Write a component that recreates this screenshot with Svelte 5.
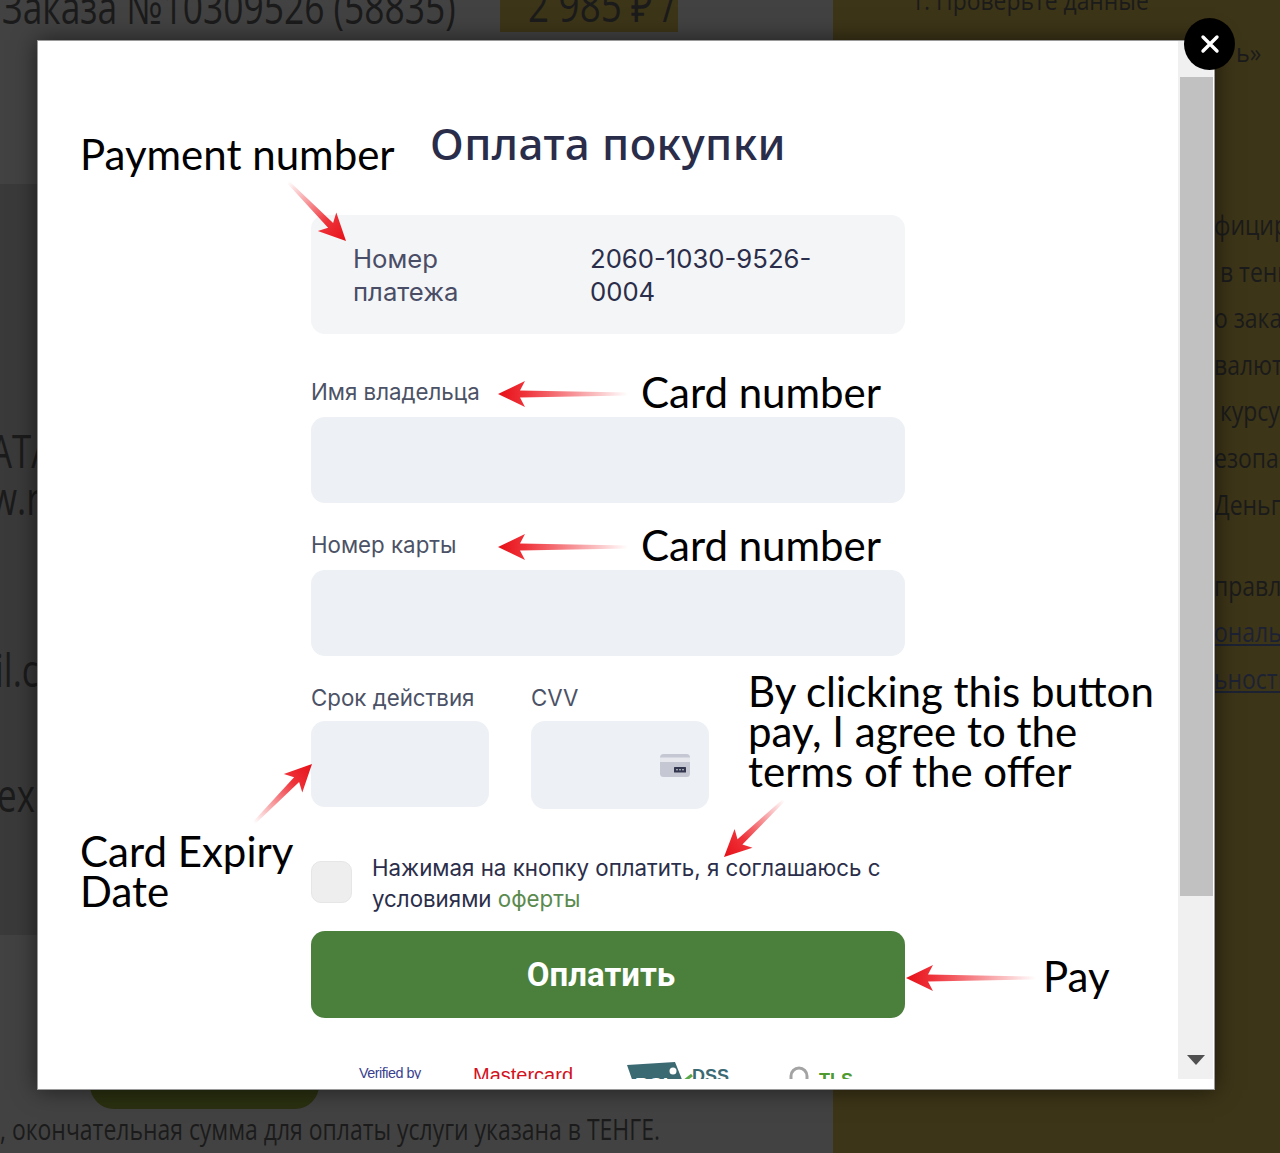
<script>
  // arrows drawn on top of the screenshot: tail -> tip
  const rawArrows = [
    { x1: 288, y1: 182, x2: 346, y2: 241 },
    { x1: 628, y1: 394, x2: 498, y2: 394 },
    { x1: 628, y1: 547, x2: 498, y2: 547 },
    { x1: 254, y1: 823, x2: 312, y2: 764 },
    { x1: 784, y1: 800, x2: 724, y2: 857 },
    { x1: 1036, y1: 978, x2: 906, y2: 978 }
  ];

  const arrows = rawArrows.map((a, i) => {
    const dx = a.x2 - a.x1;
    const dy = a.y2 - a.y1;
    const len = Math.hypot(dx, dy);
    const ux = dx / len;
    const uy = dy / len;
    const nx = -uy;
    const ny = ux;
    const pt = (back, side) =>
      `${(a.x2 - ux * back + nx * side).toFixed(1)},${(a.y2 - uy * back + ny * side).toFixed(1)}`;
    return {
      ...a,
      id: `arrow-${i}`,
      solid: 1 - 27 / len,
      points: [
        pt(0, 0),
        pt(27, 13),
        pt(22, 3.5),
        pt(len, 1.5),
        pt(len, -1.5),
        pt(22, -3.5),
        pt(27, -13)
      ].join(' ')
    };
  });

  const rightLines = [
    { text: 'фицированным' },
    { text: ' в тенге' },
    { text: 'о заказа' },
    { text: 'валюте' },
    { text: ' курсу' },
    { text: 'езопасно' },
    { text: 'Деньги' },
    { text: 'правлен', gap: true },
    { text: 'ональных', link: true },
    { text: 'ьности', link: true }
  ];
</script>

<div class="page">
  <div class="left">
    <div class="order-head">
      <span class="order-title">Заказа №10309526 (58835)</span>
      <span class="order-sum"><span>2 985 ₽ /</span></span>
    </div>
    <div class="band">
      <div class="band-line first">АТА</div>
      <div class="band-line second">w.r</div>
      <div class="band-line third">il.c</div>
      <div class="band-line fourth">ex</div>
    </div>
    <div class="under-btn"></div>
    <div class="total-note">, окончательная сумма для оплаты услуги указана в ТЕНГЕ.</div>
  </div>

  <div class="right">
    <div class="step">1. Проверьте данные</div>
    <div class="step-end">ь»</div>
    <div class="right-list">
      {#each rightLines as line}
        <div class="right-line" class:gap={line.gap} class:link={line.link}>{line.text}</div>
      {/each}
    </div>
  </div>

  <div class="modal">
    <div class="modal-inner">
      <div class="scroll-area">
        <form class="pay-form" on:submit|preventDefault>
          <h1>Оплата покупки</h1>

          <div class="info-box">
            <span class="info-label">Номер платежа</span>
            <span class="info-value">2060-1030-9526-0004</span>
          </div>

          <label class="field-label first" for="holder">Имя владельца</label>
          <input class="field" id="holder" type="text" />

          <label class="field-label second" for="card">Номер карты</label>
          <input class="field" id="card" type="text" />

          <div class="short-row">
            <div class="short-col">
              <label class="field-label" for="expiry">Срок действия</label>
              <input class="field short" id="expiry" type="text" />
            </div>
            <div class="short-col cvv-col">
              <label class="field-label" for="cvv">CVV</label>
              <div class="cvv-wrap">
                <input class="field short cvv" id="cvv" type="text" />
                <svg class="cvv-icon" width="30" height="23" viewBox="0 0 30 23">
                  <rect width="30" height="23" rx="3.5" fill="#c5c8d2" />
                  <rect y="3.5" width="30" height="4.5" fill="#e6e8ed" />
                  <rect x="14" y="13" width="12" height="5.5" rx="0.5" fill="#33364f" />
                  <circle cx="17" cy="15.7" r="0.8" fill="#dfe1e8" />
                  <circle cx="20" cy="15.7" r="0.8" fill="#dfe1e8" />
                  <circle cx="23" cy="15.7" r="0.8" fill="#dfe1e8" />
                </svg>
              </div>
            </div>
          </div>

          <div class="agree">
            <input class="check" type="checkbox" id="agree" />
            <label for="agree">Нажимая на кнопку оплатить, я соглашаюсь с условиями <a href="#offer">оферты</a></label>
          </div>

          <button type="submit">Оплатить</button>

          <div class="logos">
            <span class="visa">Verified by</span>
            <span class="mc">Mastercard</span>
            <span class="pci">
              <svg width="66" height="40" viewBox="0 0 66 40">
                <path d="M0 3 L48 0 L56 20 L56 40 L13 40 Z" fill="#3c6a73" />
                <circle cx="46" cy="9" r="3.5" fill="#fff" />
                <path d="M56 20 L65 13" fill="none" stroke="#5aa84a" stroke-width="3" />
                <text x="8" y="30" font-family="Liberation Sans, sans-serif" font-size="20" font-weight="700" fill="#fff">PCI</text>
              </svg>
              <b>DSS</b>
            </span>
            <span class="tls">
              <svg width="24" height="30" viewBox="0 0 24 30">
                <path d="M4 14 V11 a8 8 0 0 1 16 0 V14" fill="none" stroke="#a3a3a3" stroke-width="3" />
                <rect x="0" y="14" width="24" height="16" rx="2" fill="#6fae3f" />
              </svg>
              <b>TLS</b>
            </span>
          </div>
        </form>
      </div>

      <div class="scrollbar">
        <div class="thumb"></div>
        <span class="scroll-down"></span>
      </div>
    </div>
  </div>

  <button class="close" type="button" aria-label="Закрыть">
    <svg width="20" height="20" viewBox="0 0 20 20">
      <path d="M3 3 L17 17 M17 3 L3 17" stroke="#fff" stroke-width="3.4" stroke-linecap="round" />
    </svg>
  </button>

  <!-- annotations lying over the screenshot -->
  <svg class="arrows" width="1280" height="1153" viewBox="0 0 1280 1153">
    <defs>
      {#each arrows as a}
        <linearGradient id={a.id} gradientUnits="userSpaceOnUse" x1={a.x1} y1={a.y1} x2={a.x2} y2={a.y2}>
          <stop offset="0" stop-color="#ed1c24" stop-opacity="0" />
          <stop offset={a.solid} stop-color="#ed1c24" stop-opacity="0.9" />
          <stop offset="1" stop-color="#e60f17" />
        </linearGradient>
      {/each}
    </defs>
    {#each arrows as a}
      <polygon points={a.points} fill="url(#{a.id})" />
    {/each}
  </svg>

  <div class="note payment">Payment number</div>
  <div class="note card-one">Card number</div>
  <div class="note card-two">Card number</div>
  <div class="note offer">By clicking this button<br />pay, I agree to the<br />terms of the offer</div>
  <div class="note expiry">Card Expiry<br />Date</div>
  <div class="note pay">Pay</div>
</div>

<style>
  :global(body) {
    margin: 0;
    background: #424242;
  }

  .page {
    position: relative;
    width: 1280px;
    height: 1153px;
    overflow: hidden;
    display: grid;
    grid-template-columns: 833px 447px;
    font-family: "Inter", "Noto Sans", sans-serif;
  }

  .left,
  .right {
    font-family: "Open Sans", sans-serif;
    color: #1b1b1b;
  }

  .left {
    background: #424242;
    display: flex;
    flex-direction: column;
    overflow: hidden;
  }

  .order-head {
    height: 184px;
    flex: none;
    display: flex;
    align-items: flex-start;
    padding-left: 2px;
    box-sizing: border-box;
  }

  .order-title {
    margin-top: -21px;
    font-size: 46px;
    line-height: 54px;
    width: 498px;
    flex: none;
    white-space: nowrap;
    transform: scaleX(0.77);
    transform-origin: left;
  }

  .order-sum {
    background: #3d3518;
    width: 150px;
    height: 32px;
    padding-left: 28px;
    flex: none;
    font-size: 46px;
    line-height: 32px;
    white-space: nowrap;
    overflow: hidden;
  }

  .order-sum span {
    display: inline-block;
    transform: translateY(-12px) scaleX(0.8);
    transform-origin: left;
  }

  .band {
    height: 751px;
    flex: none;
    background: #3a3a3a;
    font-size: 46px;
    line-height: 47px;
    overflow: hidden;
  }

  .band-line {
    white-space: nowrap;
    margin-left: -10px;
    transform: scaleX(0.76);
    transform-origin: left;
  }

  .band-line.first {
    margin-top: 243px;
  }

  .band-line.third {
    margin-top: 125px;
    margin-left: -5px;
  }

  .band-line.fourth {
    margin-top: 78px;
    margin-left: -3px;
  }

  .under-btn {
    margin-left: 90px;
    width: 229px;
    height: 174px;
    flex: none;
    background: #2a3010;
    border-radius: 0 0 24px 24px;
  }

  .total-note {
    margin-top: 2px;
    font-size: 30px;
    line-height: 36px;
    white-space: nowrap;
    transform: scaleX(0.765);
    transform-origin: left;
  }

  .right {
    background: #3d3518;
    overflow: hidden;
  }

  .step {
    margin: -16px 0 0 78px;
    font-size: 26px;
    line-height: 32px;
    white-space: nowrap;
    transform: scaleX(0.88);
    transform-origin: left;
  }

  .step-end {
    margin: 20px 0 0 403px;
    font-size: 26px;
    line-height: 32px;
    transform: scaleX(0.9);
    transform-origin: left;
  }

  .right-list {
    margin-top: 134px;
    padding-left: 381px;
  }

  .right-line {
    font-size: 27px;
    line-height: 46.6px;
    white-space: pre;
    transform: scaleX(0.85);
    transform-origin: left;
  }

  .right-line.gap {
    margin-top: 34.5px;
  }

  .right-line.link {
    text-decoration: underline;
    color: #1d2233;
  }

  .modal {
    position: absolute;
    left: 37px;
    top: 40px;
    width: 1178px;
    height: 1050px;
    background: #fff;
    border: 1px solid #9a9a9a;
    box-sizing: border-box;
    box-shadow: 0 0 22px rgba(0, 0, 0, 0.55);
  }

  .modal-inner {
    display: flex;
    height: 1038px;
  }

  .scroll-area {
    flex: 1;
    overflow: hidden;
  }

  .scrollbar {
    width: 35px;
    margin-right: 1px;
    flex: none;
    background: #f0f0f0;
    position: relative;
    padding-top: 36px;
    box-sizing: border-box;
  }

  .thumb {
    margin-left: 2px;
    height: 819px;
    background: #c1c1c1;
  }

  .scroll-down {
    position: absolute;
    right: 8px;
    bottom: 14px;
    width: 0;
    height: 0;
    border-left: 9px solid transparent;
    border-right: 9px solid transparent;
    border-top: 10px solid #505050;
  }

  .pay-form {
    width: 594px;
    margin-left: 273px;
  }

  h1 {
    margin: 0;
    padding-top: 77px;
    font-size: 44px;
    line-height: 50px;
    font-weight: 500;
    text-align: center;
    color: #2a2d4a;
    font-family: "Noto Sans", "Inter", sans-serif;
    letter-spacing: 0.4px;
  }

  .info-box {
    margin-top: 47px;
    height: 119px;
    box-sizing: border-box;
    padding: 27px 42px;
    background: #f4f5f7;
    border-radius: 14px;
    display: grid;
    grid-template-columns: 237px 232px;
    font-size: 25.7px;
    line-height: 33px;
  }

  .info-label {
    color: #4a4d66;
    width: 130px;
  }

  .info-value {
    color: #2b2e4a;
  }

  .field-label {
    display: block;
    font-size: 22.3px;
    line-height: 28px;
    color: #4c5266;
    margin-bottom: 9px;
  }

  .field-label.first {
    margin-top: 44px;
    margin-bottom: 11px;
  }

  .field-label.second {
    margin-top: 28px;
    margin-bottom: 11px;
  }

  .field {
    display: block;
    width: 100%;
    height: 86px;
    box-sizing: border-box;
    border: 0;
    border-radius: 14px;
    background: #edf0f4;
    padding: 0 16px;
    outline: none;
  }

  .short-row {
    display: flex;
    gap: 42px;
    margin-top: 28px;
  }

  .short-col {
    width: 178px;
  }

  .cvv-wrap {
    position: relative;
  }

  .field.cvv {
    height: 88px;
  }

  .cvv-icon {
    position: absolute;
    right: 19px;
    top: 33px;
  }

  .agree {
    display: flex;
    gap: 20px;
    margin-top: 44px;
    align-items: flex-start;
    height: 78px;
    font-size: 22.3px;
    line-height: 31px;
    color: #2b2e4a;
  }

  .agree label {
    margin-top: -1px;
  }

  .check {
    appearance: none;
    flex: none;
    width: 41px;
    height: 42px;
    margin: 8px 0 0;
    background: #eeeeee;
    border: 1px solid #e6e6e6;
    border-radius: 10px;
    box-sizing: border-box;
  }

  .agree a {
    color: #5b8a4e;
    text-decoration: none;
  }

  button[type="submit"] {
    display: block;
    width: 100%;
    height: 87px;
    border: 0;
    border-radius: 14px;
    background: #4b7f3c;
    color: #fff;
    font-family: "Roboto", "Inter", sans-serif;
    font-size: 33px;
    font-weight: 700;
    padding: 0 14px 0 0;
    cursor: pointer;
  }

  .logos {
    height: 40px;
    margin-top: 44px;
    display: flex;
    align-items: flex-start;
  }

  .visa {
    margin-left: 48px;
    margin-top: 1px;
    width: 114px;
    flex: none;
    font-family: "Liberation Sans", sans-serif;
    font-size: 14.4px;
    letter-spacing: -0.5px;
    color: #3a3f8f;
    line-height: 20px;
  }

  .mc {
    width: 154px;
    flex: none;
    font-family: "Liberation Sans", sans-serif;
    font-size: 20px;
    line-height: 26px;
    color: #d3121e;
  }

  .pci {
    width: 160px;
    flex: none;
    display: flex;
    position: relative;
  }

  .pci svg {
    flex: none;
  }

  .pci b {
    position: absolute;
    left: 65px;
    top: 4px;
    font-family: "Liberation Sans", sans-serif;
    font-size: 18px;
    color: #3c6a73;
  }

  .tls {
    display: flex;
    gap: 8px;
    margin-top: 3px;
  }

  .tls b {
    font-family: "Liberation Sans", sans-serif;
    font-size: 18px;
    color: #4f9a2c;
    line-height: 26px;
    margin-top: 2px;
  }

  .close {
    position: absolute;
    left: 1184px;
    top: 18px;
    width: 51px;
    height: 52px;
    padding: 0;
    border: 0;
    border-radius: 50%;
    background: #000;
    display: flex;
    align-items: center;
    justify-content: center;
  }

  .arrows {
    position: absolute;
    left: 0;
    top: 0;
    pointer-events: none;
  }

  .note {
    position: absolute;
    font-family: "Lato", "Open Sans", sans-serif;
    font-size: 42px;
    line-height: 40px;
    color: #000;
    white-space: nowrap;
  }

  .note.payment {
    left: 80px;
    top: 134px;
  }

  .note.card-one {
    left: 641px;
    top: 372px;
  }

  .note.card-two {
    left: 641px;
    top: 525px;
  }

  .note.offer {
    left: 748px;
    top: 671px;
  }

  .note.expiry {
    left: 80px;
    top: 831px;
  }

  .note.pay {
    left: 1043px;
    top: 956px;
  }
</style>
